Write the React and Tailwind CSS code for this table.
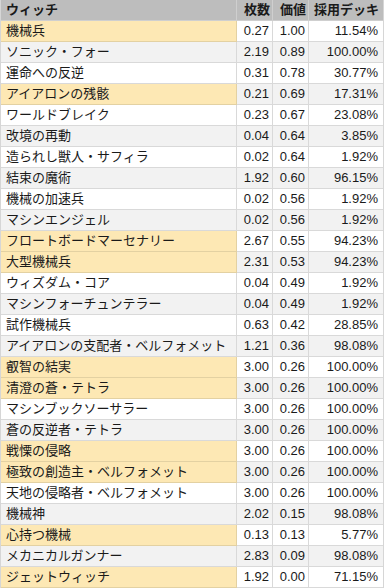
import React from 'react';

const rows = [
  ['機械兵', '0.27', '1.00', '11.54%', true],
  ['ソニック・フォー', '2.19', '0.89', '100.00%'],
  ['運命への反逆', '0.31', '0.78', '30.77%'],
  ['アイアロンの残骸', '0.21', '0.69', '17.31%', true],
  ['ワールドブレイク', '0.23', '0.67', '23.08%'],
  ['改境の再動', '0.04', '0.64', '3.85%'],
  ['造られし獣人・サフィラ', '0.02', '0.64', '1.92%'],
  ['結束の魔術', '1.92', '0.60', '96.15%'],
  ['機械の加速兵', '0.02', '0.56', '1.92%'],
  ['マシンエンジェル', '0.02', '0.56', '1.92%'],
  ['フロートボードマーセナリー', '2.67', '0.55', '94.23%', true],
  ['大型機械兵', '2.31', '0.53', '94.23%', true],
  ['ウィズダム・コア', '0.04', '0.49', '1.92%'],
  ['マシンフォーチュンテラー', '0.04', '0.49', '1.92%'],
  ['試作機械兵', '0.63', '0.42', '28.85%'],
  ['アイアロンの支配者・ベルフォメット', '1.21', '0.36', '98.08%'],
  ['叡智の結実', '3.00', '0.26', '100.00%', true],
  ['清澄の蒼・テトラ', '3.00', '0.26', '100.00%', true],
  ['マシンブックソーサラー', '3.00', '0.26', '100.00%'],
  ['蒼の反逆者・テトラ', '3.00', '0.26', '100.00%'],
  ['戦慄の侵略', '3.00', '0.26', '100.00%', true],
  ['極致の創造主・ベルフォメット', '3.00', '0.26', '100.00%', true],
  ['天地の侵略者・ベルフォメット', '3.00', '0.26', '100.00%'],
  ['機械神', '2.02', '0.15', '98.08%'],
  ['心持つ機械', '0.13', '0.13', '5.77%', true],
  ['メカニカルガンナー', '2.83', '0.09', '98.08%'],
  ['ジェットウィッチ', '1.92', '0.00', '71.15%', true],
];

export default function App() {
  return (
    <div
      className="w-[384px] border-l border-r border-[#d6d6d6] bg-white text-[13px] leading-[20px] text-[#1a1a1a]"
      style={{ fontFamily: '"Liberation Sans", "Noto Sans CJK JP", sans-serif' }}
    >
      <div className="flex h-[21px] bg-[#bdbdbd] font-bold">
        <div className="w-[236px] border-b border-r border-[#cfcfcf] pl-[5px]">ウィッチ</div>
        <div className="w-[36px] border-b border-r border-[#cfcfcf] pr-[2px] text-right">枚数</div>
        <div className="w-[36px] border-b border-r border-[#cfcfcf] pr-[2px] text-right">価値</div>
        <div className="flex-1 border-b border-[#cfcfcf] pr-[4px] text-right">採用デッキ</div>
      </div>
      {rows.map(([name, count, value, deck, hot], i) => {
        const stripe = i % 2 === 1 ? 'bg-[#f2f2f2]' : 'bg-white';
        return (
          <div key={name} className="flex h-[21px]">
            <div
              className={
                hot
                  ? 'w-[236px] truncate border-b border-r border-[#e3d1a2] bg-[#fde8b4] pl-[5px]'
                  : `w-[236px] truncate border-b border-r border-[#d9d9d9] pl-[5px] ${stripe}`
              }
            >
              {name}
            </div>
            <div className={`w-[36px] border-b border-r border-[#d9d9d9] pr-[3px] text-right ${stripe}`}>{count}</div>
            <div className={`w-[36px] border-b border-r border-[#d9d9d9] pr-[3px] text-right ${stripe}`}>{value}</div>
            <div className={`flex-1 border-b border-[#d9d9d9] pr-[5px] text-right ${stripe}`}>{deck}</div>
          </div>
        );
      })}
    </div>
  );
}
